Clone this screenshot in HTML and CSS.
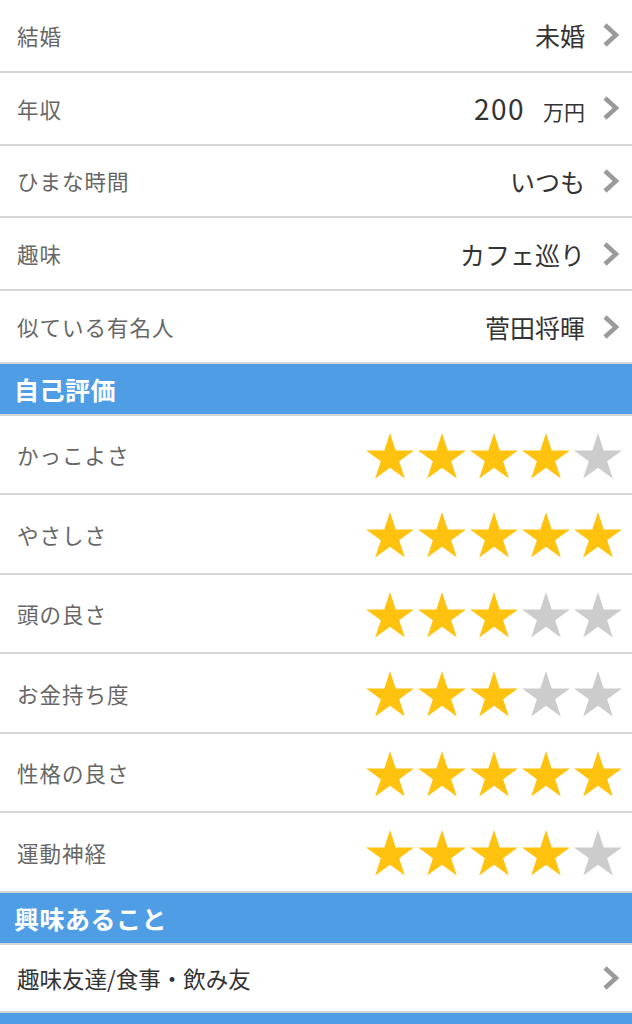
FILE: index.html
```html
<!DOCTYPE html>
<html lang="ja">
<head>
<meta charset="utf-8">
<link rel="stylesheet" href="styles.css">
</head>
<body>
<div class="list">
  <div class="row first"><span class="label">結婚</span><span class="value">未婚</span><svg class="chev" viewBox="0 0 18 26"><polyline points="3,3 14,13 3,23"/></svg></div>
  <div class="row"><span class="label">年収</span><span class="value"><span class="num">200</span><span class="unit">万円</span></span><svg class="chev" viewBox="0 0 18 26"><polyline points="3,3 14,13 3,23"/></svg></div>
  <div class="row"><span class="label">ひまな時間</span><span class="value">いつも</span><svg class="chev" viewBox="0 0 18 26"><polyline points="3,3 14,13 3,23"/></svg></div>
  <div class="row"><span class="label">趣味</span><span class="value">カフェ巡り</span><svg class="chev" viewBox="0 0 18 26"><polyline points="3,3 14,13 3,23"/></svg></div>
  <div class="row"><span class="label">似ている有名人</span><span class="value">菅田将暉</span><svg class="chev" viewBox="0 0 18 26"><polyline points="3,3 14,13 3,23"/></svg></div>
</div>

<div class="section">自己評価</div>
<div class="list">
  <div class="srow"><span class="label">かっこよさ</span><div class="stars" data-n="4"></div></div>
  <div class="srow"><span class="label">やさしさ</span><div class="stars" data-n="5"></div></div>
  <div class="srow"><span class="label">頭の良さ</span><div class="stars" data-n="3"></div></div>
  <div class="srow"><span class="label">お金持ち度</span><div class="stars" data-n="3"></div></div>
  <div class="srow"><span class="label">性格の良さ</span><div class="stars" data-n="5"></div></div>
  <div class="srow"><span class="label">運動神経</span><div class="stars" data-n="4"></div></div>
</div>

<div class="section">興味あること</div>
<div class="list">
  <div class="irow"><span class="ilabel">趣味友達/食事・飲み友</span><svg class="chev" viewBox="0 0 18 26"><polyline points="3,3 14,13 3,23"/></svg></div>
</div>
<div class="section"></div>

<script src="app.js"></script>
</body>
</html>
```

FILE: app.js
```js
document.querySelectorAll('.stars').forEach(function (el) {
  var n = parseInt(el.getAttribute('data-n'), 10);
  var html = '';
  for (var i = 0; i < 5; i++) {
    html += '<svg class="star ' + (i < n ? 'on' : 'off') + '" viewBox="0 0 48 46"><polygon points="24,0 29.66,17.41 47.97,17.41 33.16,28.18 38.81,45.59 24,34.83 9.19,45.59 14.84,28.18 0.03,17.41 18.34,17.41"/></svg>';
  }
  el.innerHTML = html;
});
```

FILE: styles.css
```css
html, body {
  margin: 0;
  padding: 0;
  background: #ffffff;
}
body {
  width: 632px;
  height: 1024px;
  overflow: hidden;
  font-family: "Noto Sans CJK JP", "Noto Sans", sans-serif;
}
.list {
  display: flex;
  flex-direction: column;
}
.row {
  height: 70.8px;
  border-bottom: 2px solid #d6d6d6;
  display: flex;
  align-items: center;
  padding: 0 12px 0 17px;
  box-sizing: content-box;
}
.label {
  font-size: 21.5px;
  color: #666666;
  letter-spacing: 1px;
  flex: 1;
}
.value {
  font-size: 25px;
  color: #333333;
  display: flex;
  align-items: baseline;
  margin-right: 17px;
}
.num {
  font-size: 28px;
  letter-spacing: 1.5px;
}
.unit {
  font-size: 21px;
  margin-left: 18px;
}
.chev {
  width: 18px;
  height: 26px;
  flex: none;
}
.chev polyline {
  fill: none;
  stroke: #9a9a9a;
  stroke-width: 4.5;
  stroke-linejoin: miter;
}
.section {
  height: 50px;
  background: #4f9de4;
  color: #ffffff;
  font-size: 25px;
  font-weight: bold;
  display: flex;
  align-items: center;
  padding-left: 14px;
  border-bottom: 2px solid #d4d4d4;
  letter-spacing: 0.5px;
}
.srow {
  height: 77.5px;
  border-bottom: 2px solid #d6d6d6;
  display: flex;
  align-items: center;
  padding: 0 10px 0 17px;
}
.stars {
  display: flex;
  gap: 4px;
  margin-top: 2px;
}
.star {
  width: 48px;
  height: 46px;
}
.star.on polygon { fill: #ffc20e; }
.star.off polygon { fill: #cccccc; }
.irow {
  height: 66px;
  border-bottom: 2px solid #d6d6d6;
  display: flex;
  align-items: center;
  padding: 0 12px 0 17px;
}
.ilabel {
  font-size: 22.5px;
  color: #333333;
  flex: 1;
}
```
